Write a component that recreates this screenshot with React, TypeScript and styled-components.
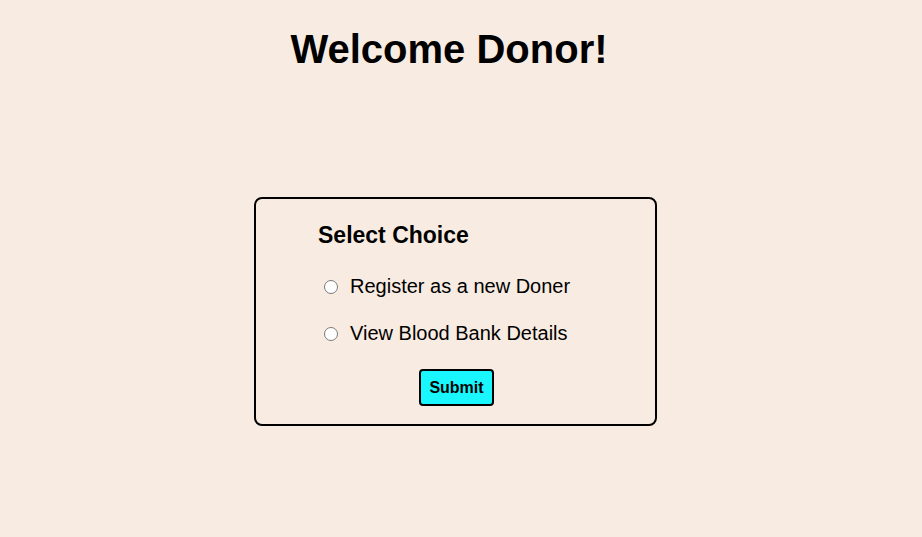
import React from "react";
import styled, { createGlobalStyle } from "styled-components";

const Global = createGlobalStyle`
  html, body {
    margin: 0;
    padding: 0;
    background: #f8ece2;
    font-family: "Liberation Sans", Arial, sans-serif;
    color: #000;
  }
`;

const Page = styled.div`
  width: 898px;
  display: flex;
  flex-direction: column;
`;

const Title = styled.h1`
  margin: 27px 0 0;
  font-size: 40px;
  font-weight: 700;
  line-height: normal;
  text-align: center;
`;

const Card = styled.form`
  box-sizing: border-box;
  margin: 125px 0 0 254px;
  width: 403px;
  height: 229px;
  border: 2px solid #000;
  border-radius: 8px;
  padding: 23px 0 0 62px;
  display: flex;
  flex-direction: column;
`;

const Heading = styled.h2`
  margin: 0;
  font-size: 23px;
  font-weight: 700;
  line-height: normal;
`;

const Option = styled.label`
  display: flex;
  align-items: center;
  gap: 12px;
  margin: 26px 0 0 6px;
  font-size: 20px;
  line-height: 23px;
  height: 23px;
  &:nth-of-type(2) {
    margin-top: 24px;
  }
`;

const Radio = styled.input`
  appearance: none;
  -webkit-appearance: none;
  box-sizing: border-box;
  margin: 0;
  width: 14px;
  height: 14px;
  flex: none;
  border: 1.5px solid #7a7a7a;
  border-radius: 50%;
  background: #fff;

  &:checked {
    border-color: #0075ff;
    box-shadow: inset 0 0 0 3px #fff;
    background: #0075ff;
  }
`;

const Submit = styled.button`
  align-self: flex-start;
  margin: 24px 0 0 101px;
  box-sizing: border-box;
  height: 37px;
  width: 75px;
  padding: 0;
  background: #19f6fd;
  border: 2px solid #000;
  border-radius: 4px;
  font-family: "Liberation Sans", Arial, sans-serif;
  font-size: 16px;
  font-weight: 700;
  color: #000;
`;

export default function App() {
  return (
    <Page>
      <Global />
      <Title>Welcome Donor!</Title>
      <Card onSubmit={(e) => e.preventDefault()}>
        <Heading>Select Choice</Heading>
        <Option>
          <Radio type="radio" name="choice" value="register" />
          Register as a new Doner
        </Option>
        <Option>
          <Radio type="radio" name="choice" value="view" />
          View Blood Bank Details
        </Option>
        <Submit type="submit">Submit</Submit>
      </Card>
    </Page>
  );
}
